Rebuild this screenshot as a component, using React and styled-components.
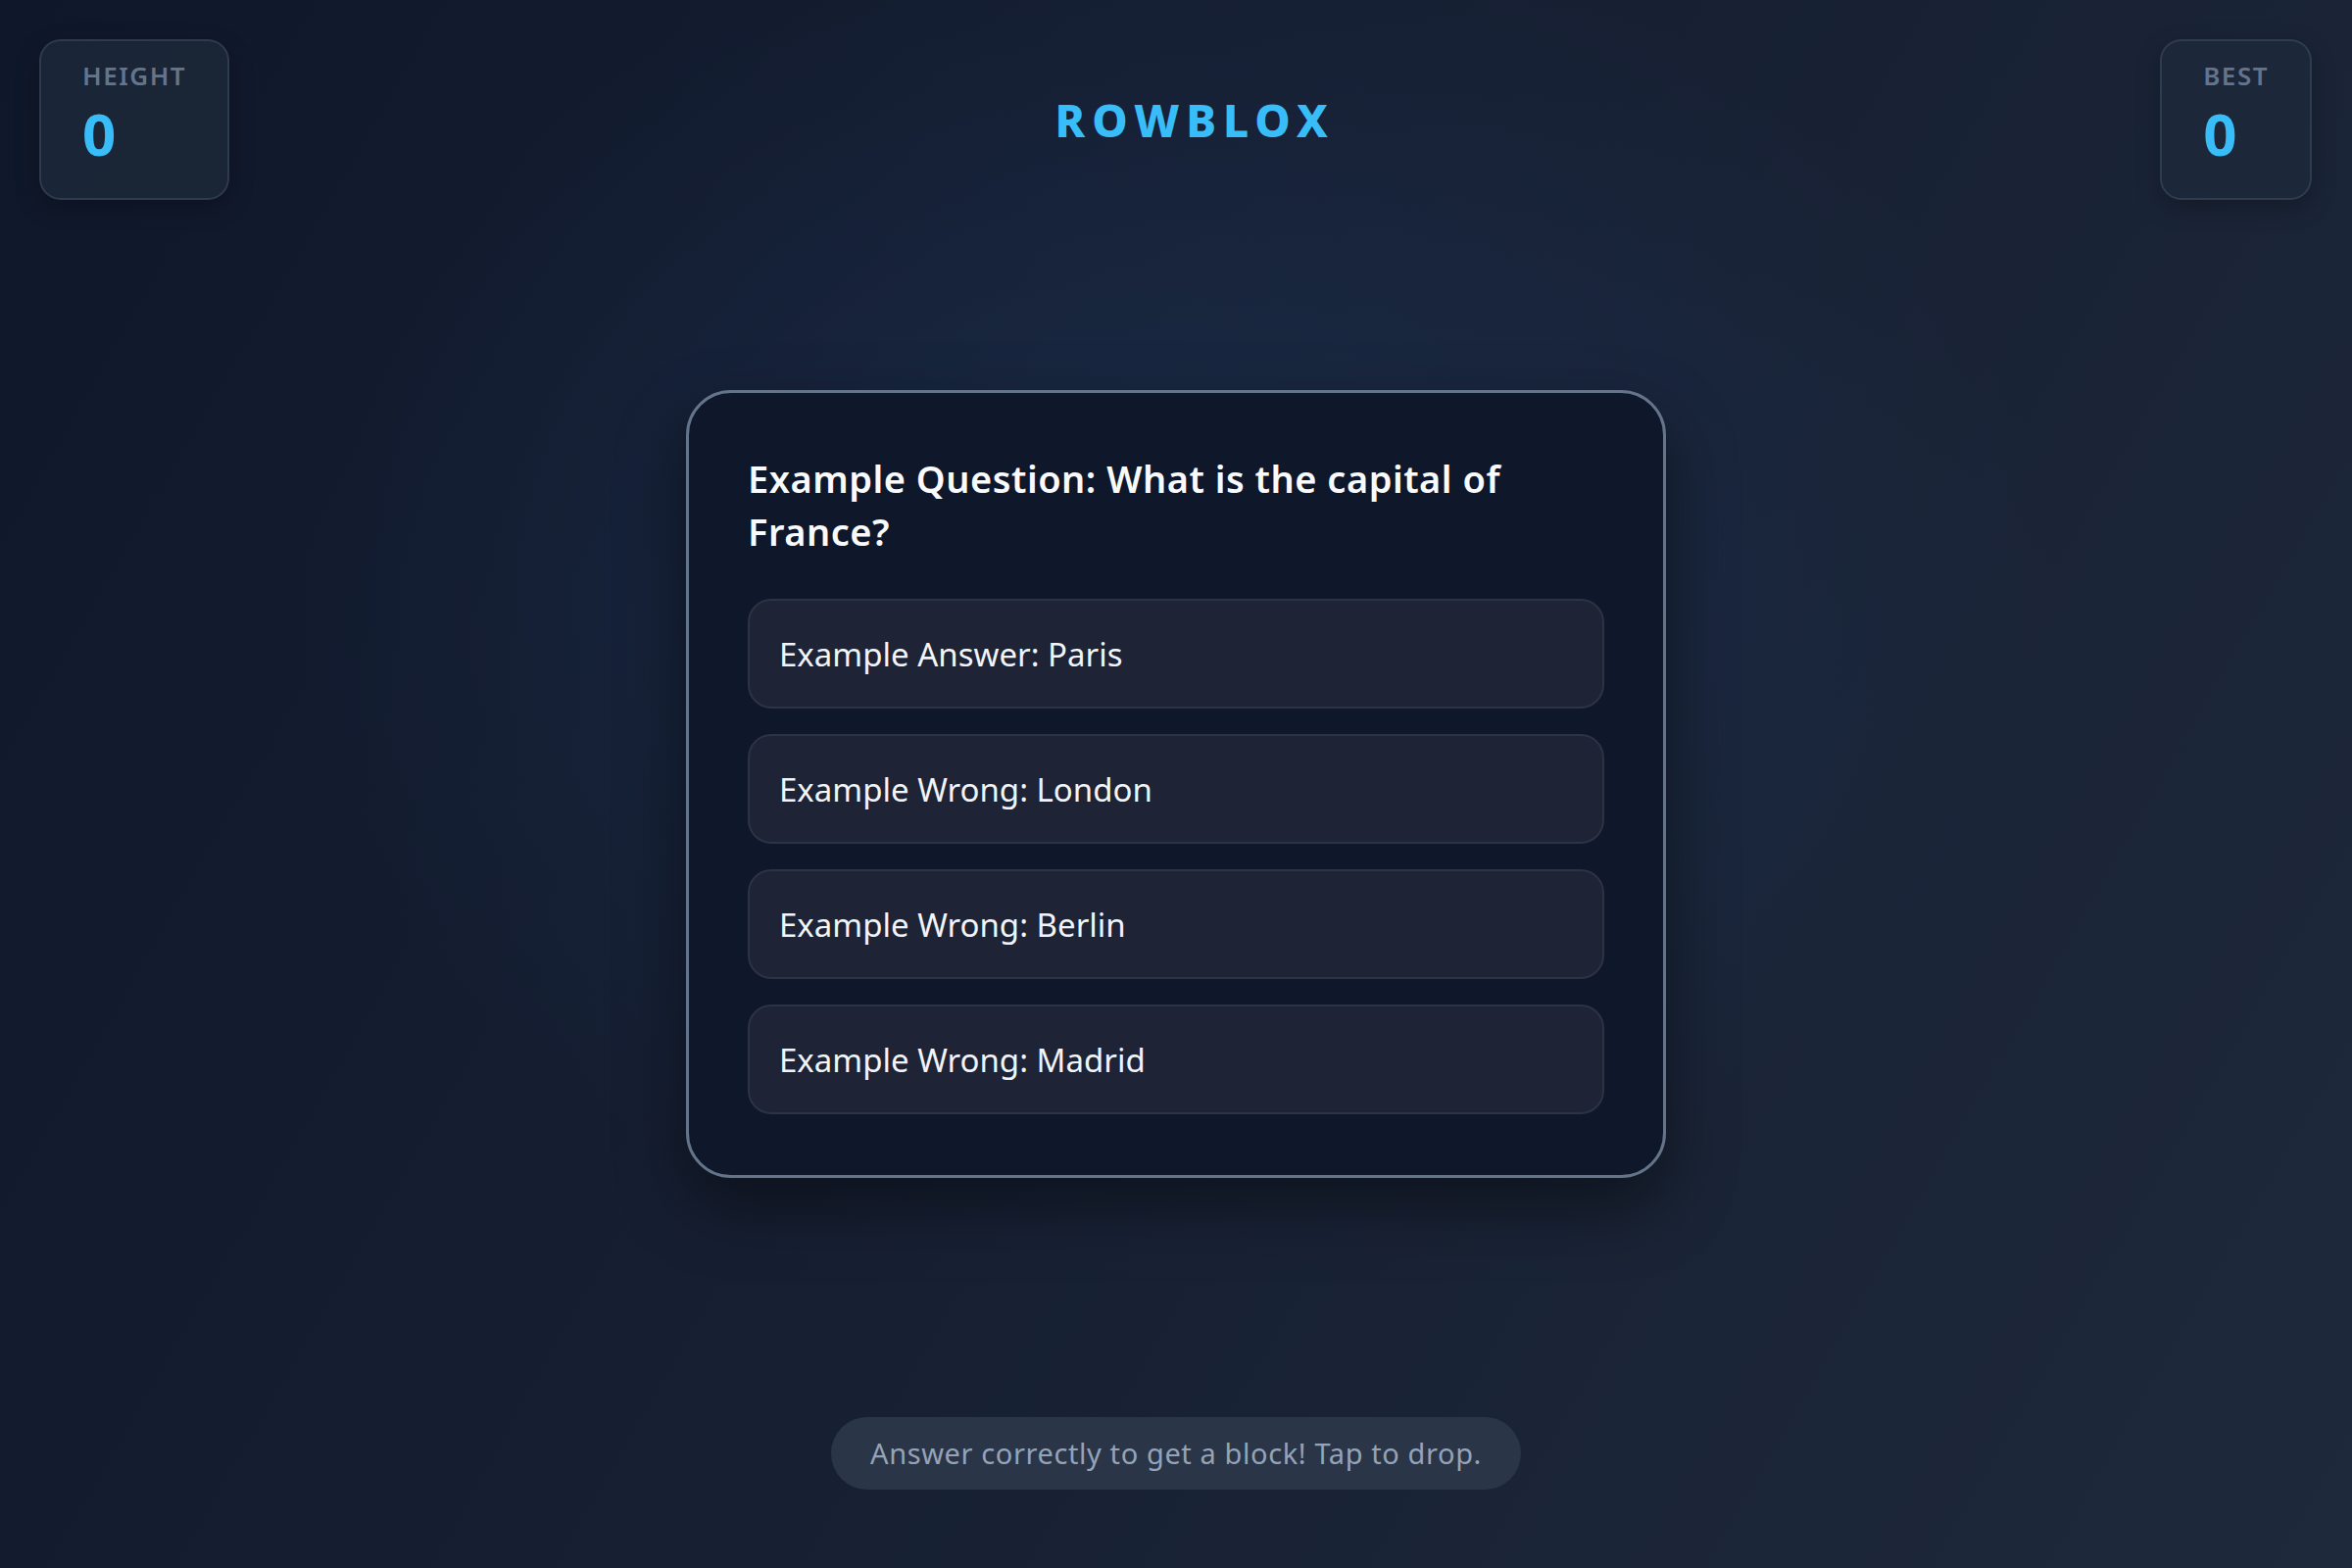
import React from 'react'
import styled, { createGlobalStyle } from 'styled-components'

const GlobalStyle = createGlobalStyle`
  * { box-sizing: border-box; }
  html, body {
    margin: 0;
    padding: 0;
    height: 100%;
  }
  body {
    font-family: "Noto Sans", "Open Sans", sans-serif;
    background: #0f172a;
    color: #f1f5f9;
  }
`

const Page = styled.div`
  min-height: 100vh;
  display: grid;
  grid-template-rows: 1fr auto 1fr;
  background:
    radial-gradient(ellipse 900px 700px at 50% 38%, rgba(28, 52, 88, 0.55), rgba(28, 52, 88, 0) 100%),
    linear-gradient(120deg, #0f172a 0%, #172033 50%, #1e293b 100%);
`

const Header = styled.header`
  align-self: start;
  display: flex;
  justify-content: space-between;
  align-items: center;
  padding: 40px 41px 0 40px;
`

const StatBox = styled.div`
  display: flex;
  flex-direction: column;
  padding: 18px 42px 33px 42px;
  background: rgba(30, 41, 59, 0.75);
  border: 2px solid rgba(71, 85, 105, 0.45);
  border-radius: 22px;
  box-shadow: 0 8px 24px rgba(0, 0, 0, 0.25);
`

const StatLabel = styled.span`
  font-size: 26px;
  font-weight: 600;
  letter-spacing: 1.5px;
  color: #64748b;
  line-height: 34px;
`

const StatValue = styled.span`
  margin-top: 9px;
  font-size: 60px;
  font-weight: 700;
  color: #38bdf8;
  line-height: 66px;
`

const Title = styled.h1`
  margin: 0;
  font-size: 46px;
  font-weight: 800;
  letter-spacing: 7px;
  color: #38bdf8;
`

const Main = styled.main`
  display: flex;
  justify-content: center;
`

const Card = styled.section`
  width: 1000px;
  padding: 60px 60px 62px 60px;
  background: #0f172a;
  border: 3px solid #64748b;
  border-radius: 46px;
  box-shadow: 0 30px 70px rgba(0, 0, 0, 0.45);
`

const Question = styled.h2`
  margin: 0 0 42px 0;
  font-size: 38px;
  font-weight: 600;
  letter-spacing: 0.5px;
  line-height: 54px;
  color: #f8fafc;
`

const Answers = styled.div`
  display: flex;
  flex-direction: column;
  gap: 26px;
`

const AnswerButton = styled.button`
  display: flex;
  align-items: center;
  height: 112px;
  padding: 0 30px;
  background: #1e2336;
  border: 2px solid #2c3345;
  border-radius: 24px;
  font-family: inherit;
  font-size: 33px;
  font-weight: 400;
  color: #f1f5f9;
  text-align: left;
  cursor: pointer;
`

const Footer = styled.footer`
  align-self: end;
  justify-self: center;
  margin-bottom: 80px;
`

const Hint = styled.div`
  padding: 18px 40px;
  line-height: 38px;
  font-size: 29px;
  letter-spacing: 0.6px;
  color: #94a3b8;
  background: #2a3548;
  border-radius: 999px;
`

const answers = [
  'Example Answer: Paris',
  'Example Wrong: London',
  'Example Wrong: Berlin',
  'Example Wrong: Madrid',
]

export default function App() {
  return (
    <>
      <GlobalStyle />
      <Page>
        <Header>
          <StatBox>
            <StatLabel>HEIGHT</StatLabel>
            <StatValue>0</StatValue>
          </StatBox>
          <Title>ROWBLOX</Title>
          <StatBox>
            <StatLabel>BEST</StatLabel>
            <StatValue>0</StatValue>
          </StatBox>
        </Header>
        <Main>
          <Card>
            <Question>Example Question: What is the capital of France?</Question>
            <Answers>
              {answers.map((a) => (
                <AnswerButton key={a}>{a}</AnswerButton>
              ))}
            </Answers>
          </Card>
        </Main>
        <Footer>
          <Hint>Answer correctly to get a block! Tap to drop.</Hint>
        </Footer>
      </Page>
    </>
  )
}
